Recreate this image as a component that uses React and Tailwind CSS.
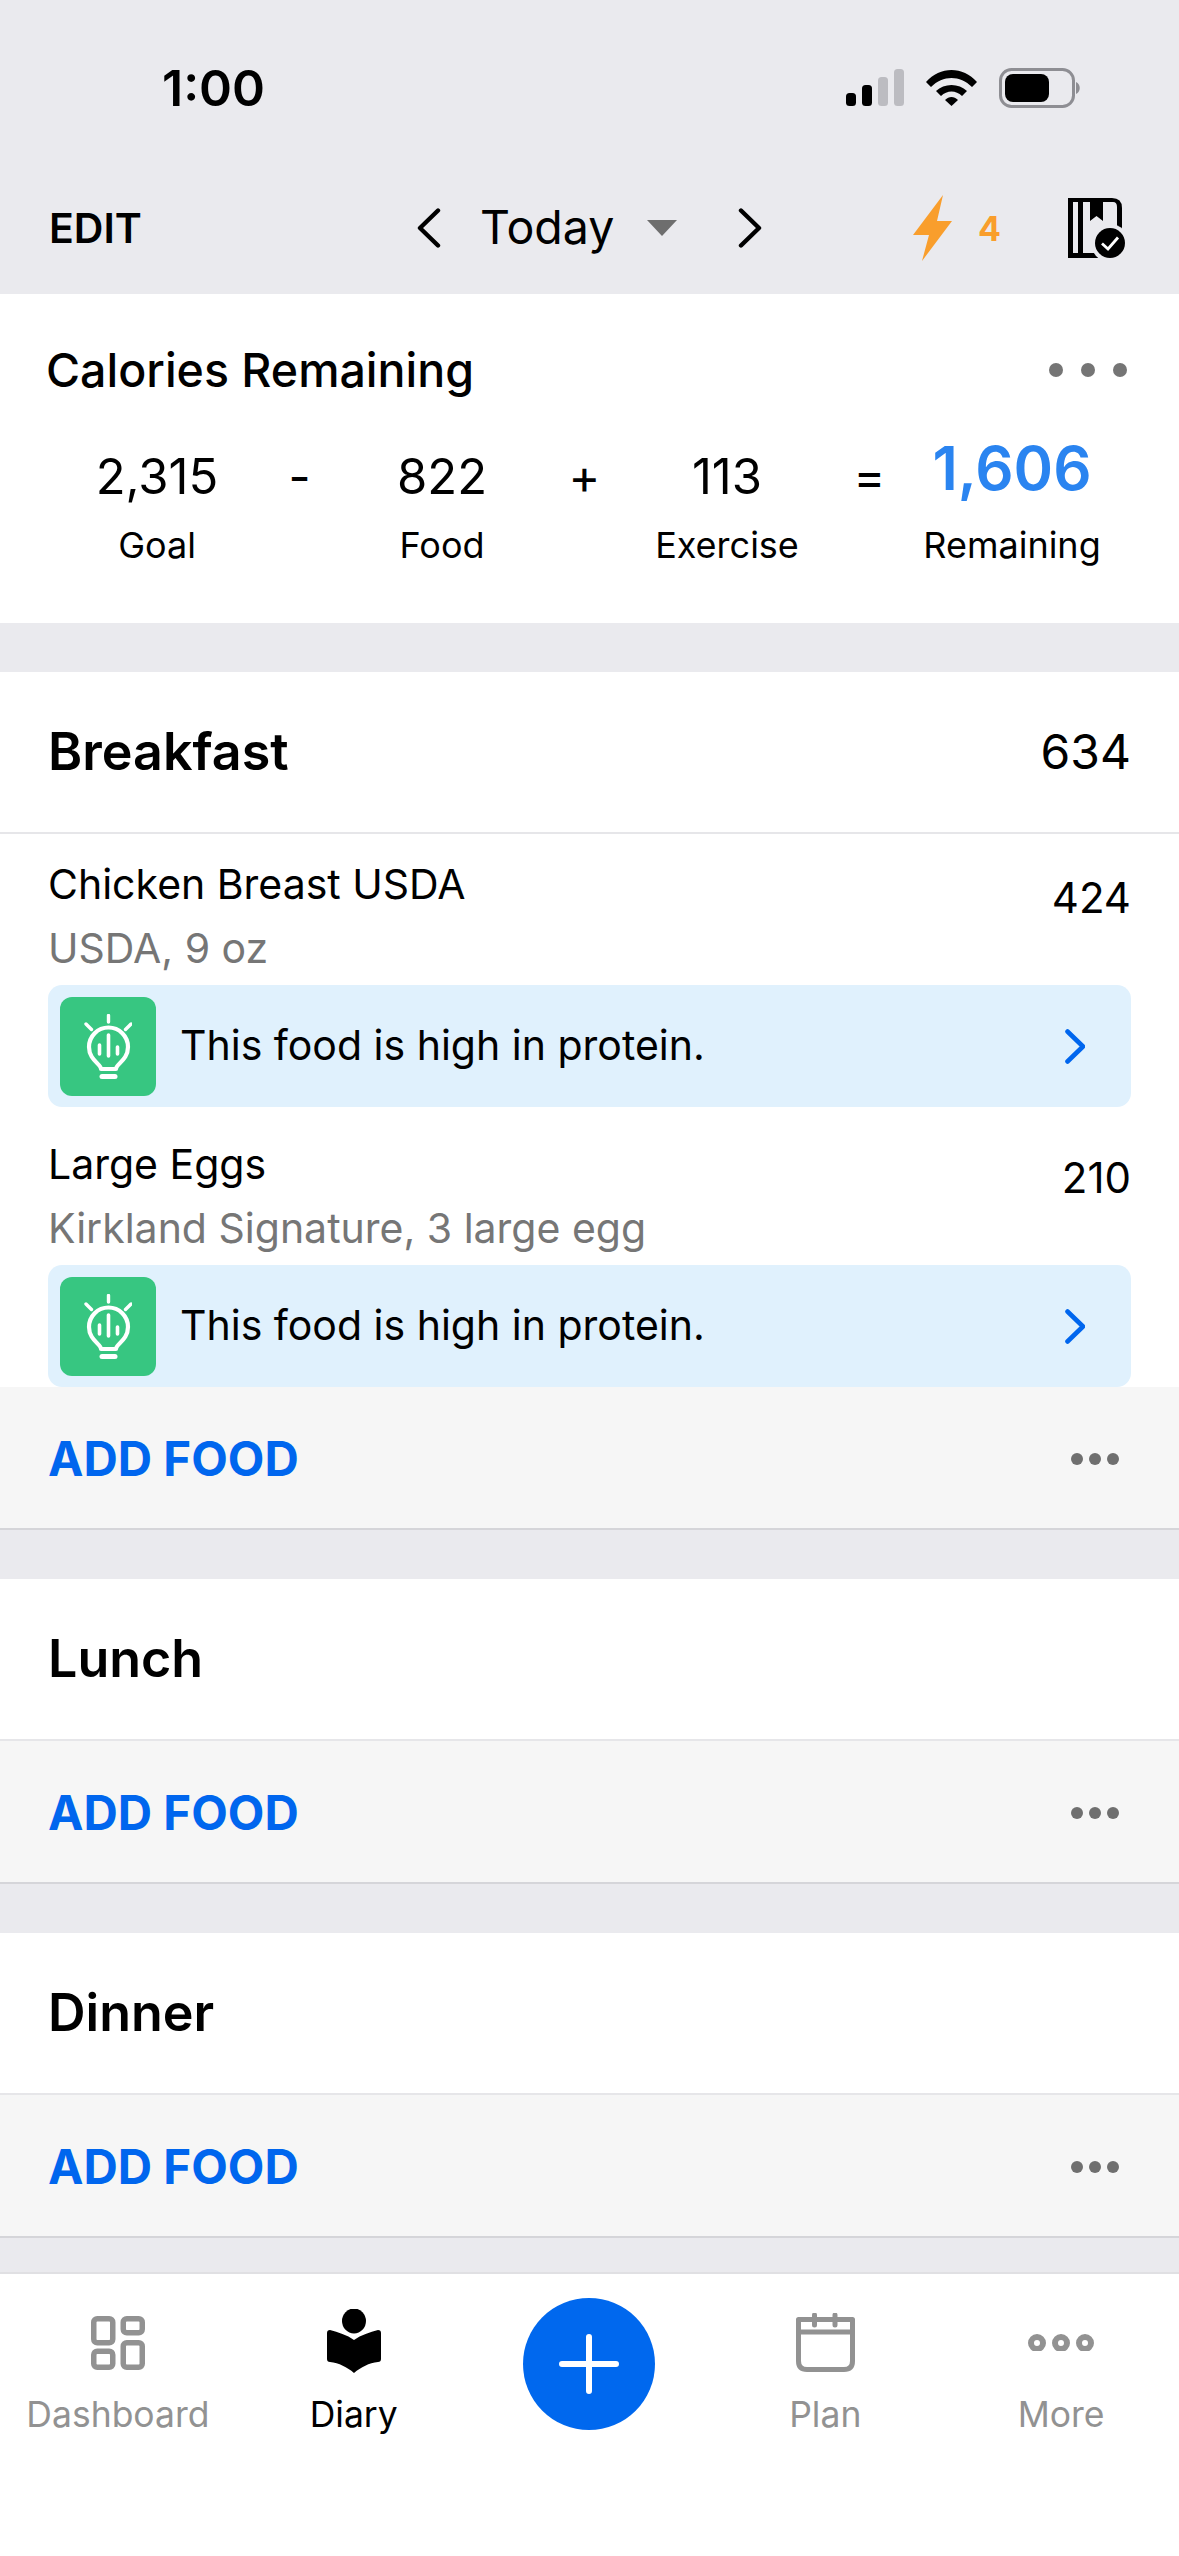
const FONT = 'font-[Inter,"Liberation_Sans",sans-serif]';

const DotsIcon = () => (
  <svg width="48" height="12" viewBox="0 0 48 12" fill="#6f6f6f">
    <circle cx="6" cy="6" r="6" />
    <circle cx="24" cy="6" r="6" />
    <circle cx="42" cy="6" r="6" />
  </svg>
);

const CardDotsIcon = () => (
  <svg width="78" height="14" viewBox="0 0 78 14" fill="#757575">
    <circle cx="7" cy="7" r="7" />
    <circle cx="39" cy="7" r="7" />
    <circle cx="71" cy="7" r="7" />
  </svg>
);

const StatusIcons = () => (
  <div className="flex items-center">
    <svg width="58" height="38" viewBox="0 0 58 38">
      <rect x="0" y="24" width="10" height="13" rx="3.5" fill="#000" />
      <rect x="16" y="16" width="10" height="21" rx="3.5" fill="#000" />
      <rect x="32" y="8" width="10" height="29" rx="3.5" fill="#bcbcc1" />
      <rect x="48" y="0" width="10" height="37" rx="3.5" fill="#bcbcc1" />
    </svg>
    <svg className="ml-[22px]" width="51" height="38" viewBox="0 0 51 38">
      <path d="M0 13 C14 -3 37 -3 51 13 L46 18 C34 6 17 6 5 18 Z" fill="#000" />
      <path d="M10 22 C18 14 33 14 41 22 L36 27 C30 21 21 21 15 27 Z" fill="#000" />
      <path d="M19 31 C23 27 28 27 32 31 L25.5 37 Z" fill="#000" />
    </svg>
    <svg className="ml-[22px]" width="82" height="40" viewBox="0 0 82 40">
      <rect x="1.5" y="1.5" width="73" height="37" rx="11" fill="none" stroke="#8e8e93" strokeWidth="3" />
      <rect x="6" y="6" width="44" height="28" rx="8" fill="#000" />
      <path d="M77 14 C82 16 82 24 77 26 Z" fill="#8e8e93" />
    </svg>
  </div>
);

const NavChevron = ({ flip }) => (
  <svg
    width="24"
    height="40"
    viewBox="0 0 24 40"
    fill="none"
    stroke="#000"
    strokeWidth="4.4"
    strokeLinecap="round"
    strokeLinejoin="round"
  >
    <path d={flip ? 'M3 2.5 L21 20 L3 37.5' : 'M21 2.5 L3 20 L21 37.5'} />
  </svg>
);

const BoltIcon = () => (
  <svg width="40" height="66" viewBox="0 0 40 66" fill="#f99e2c">
    <path d="M30 0 L0 40 L16 40 L9 66 L39 26 L24 26 Z" />
  </svg>
);

const DiaryCheckIcon = () => (
  <svg width="58" height="60" viewBox="0 0 58 60">
    <path d="M0 0 H44 Q54 0 54 10 V35 L30 60 H0 Z" fill="#000" />
    <rect x="5" y="4" width="5" height="51" fill="#eaeaee" />
    <path d="M15 4 H22 V23 L28.5 18 L35 23 V4 H45 Q49 4 49 9 V30 L28 55 H15 Z" fill="#eaeaee" />
    <circle cx="42" cy="45" r="19" fill="#eaeaee" />
    <circle cx="42" cy="45" r="15" fill="#000" />
    <path d="M34 45.5 L40 51 L50 39.5" fill="none" stroke="#fff" strokeWidth="2.8" />
  </svg>
);

const BulbIcon = () => (
  <svg width="48" height="65" viewBox="0 0 48 65" fill="none" stroke="#fff" strokeLinecap="round">
    <path d="M24.5 1.5 V8 M2 10 L7.5 15.5 M47 10 L41.5 15.5" strokeWidth="3.4" />
    <path
      d="M17 55 C17 50 5 46 5 33 A19.5 19.5 0 0 1 44 33 C44 46 32 50 32 55 Z"
      strokeWidth="4.2"
      strokeLinejoin="round"
    />
    <path d="M15.5 31 V40 M24.5 21 V42 M33.5 33 V40" strokeWidth="3.6" />
    <path d="M18 62.5 H31" strokeWidth="5" />
  </svg>
);

const Stat = ({ value, label, highlight }) => (
  <div className="w-[200px] flex flex-col items-center">
    <div
      className={
        highlight
          ? 'h-[72px] text-[60px] leading-[64px] font-semibold text-[#2a84f0]'
          : 'h-[72px] pt-[9px] text-[49px] leading-[64px] font-normal text-black'
      }
    >
      {value}
    </div>
    <div className="mt-[11px] text-[36px] leading-[52px] text-black">{label}</div>
  </div>
);

const Operator = ({ children }) => (
  <div className="w-[85px] h-[72px] pt-[9px] text-center text-[48px] leading-[64px] text-black">
    {children}
  </div>
);

const FoodRow = ({ name, detail, calories }) => (
  <div className="px-[48px] pt-[20px]">
    <div className="flex justify-between">
      <div>
        <div className="text-[41px] leading-[60px] text-black">{name}</div>
        <div className="mt-[4px] text-[41px] leading-[60px] text-[#767676]">{detail}</div>
      </div>
      <div className="pt-[14px] text-[42px] leading-[60px] text-black">{calories}</div>
    </div>
    <div className="mt-[7px] h-[122px] pl-[12px] pr-[46px] flex items-center rounded-[14px] bg-[#e0f1fd]">
      <div className="w-[96px] h-[99px] flex items-center justify-center rounded-[12px] bg-[#37c681]">
        <BulbIcon />
      </div>
      <div className="ml-[24px] flex-1 text-[41px] text-black">This food is high in protein.</div>
      <svg
        width="20"
        height="35"
        viewBox="0 0 20 35"
        fill="none"
        stroke="#0066ee"
        strokeWidth="4.6"
        strokeLinecap="round"
        strokeLinejoin="round"
      >
        <path d="M2.5 2.5 L18 17.5 L2.5 32.5" />
      </svg>
    </div>
  </div>
);

const AddFoodBar = () => (
  <div className="h-[143px] pt-[2px] px-[48px] flex items-center justify-between bg-[#f6f6f6] border-b-2 border-[#d5d5d9]">
    <div className="text-[47.5px] font-bold text-[#0066ee]">ADD FOOD</div>
    <div className="mr-[12px]">
      <DotsIcon />
    </div>
  </div>
);

const MealSection = ({ title, total, children }) => (
  <div className="mt-[49px] bg-white">
    <div className="h-[162px] px-[48px] flex items-center justify-between border-b-2 border-[#e6e6e9]">
      <div className="text-[52px] font-semibold text-black">{title}</div>
      {total && <div className="text-[48px] text-black">{total}</div>}
    </div>
    {children}
    <AddFoodBar />
  </div>
);

const TabItem = ({ icon, label, active, bottom }) => (
  <div className="flex flex-col items-center">
    <div className={`h-[100px] flex items-end justify-center ${bottom}`}>{icon}</div>
    <div className={`mt-[16px] text-[35.5px] leading-[50px] ${active ? 'text-black' : 'text-[#929292]'}`}>
      {label}
    </div>
  </div>
);

const DashboardIcon = () => (
  <svg width="54" height="54" viewBox="0 0 54 54" fill="none" stroke="#929292" strokeWidth="5.5">
    <rect x="2.75" y="2.75" width="19" height="24" rx="3.5" />
    <rect x="32.25" y="2.75" width="19" height="14" rx="3.5" />
    <rect x="2.75" y="35.25" width="19" height="16" rx="3.5" />
    <rect x="32.25" y="26.75" width="19" height="24.5" rx="3.5" />
  </svg>
);

const ReaderIcon = () => (
  <svg width="54" height="64" viewBox="0 0 54 64" fill="#000">
    <ellipse cx="27" cy="12" rx="12" ry="12.5" />
    <path d="M0 24 Q0 21 3 21 C11 23 20 26 27 31 C34 26 43 23 51 21 Q54 21 54 24 V50 Q54 53 51 53 C42 54 34 58 27 64 C20 58 12 54 3 53 Q0 53 0 50 Z" />
  </svg>
);

const CalendarIcon = () => (
  <svg width="59" height="59" viewBox="0 0 59 59" fill="none" stroke="#929292" strokeWidth="5">
    <path d="M2.5 6.5 H56.5 V48 Q56.5 56.5 48 56.5 H11 Q2.5 56.5 2.5 48 Z" strokeLinejoin="round" />
    <path d="M2.5 19 H56.5" />
    <path d="M18.5 2 V12 M39 2 V12" strokeLinecap="round" />
  </svg>
);

const MoreIcon = () => (
  <svg width="66" height="17" viewBox="0 0 66 17" fill="none" stroke="#929292" strokeWidth="6">
    <circle cx="9" cy="9" r="6" />
    <circle cx="33" cy="9" r="6" />
    <circle cx="57" cy="9" r="6" />
  </svg>
);

export default function App() {
  return (
    <div className={`w-[1179px] h-[2556px] flex flex-col overflow-hidden bg-[#eaeaee] ${FONT}`}>
      {/* Status bar + date nav */}
      <div className="h-[294px] shrink-0">
        <div className="h-[176px] pl-[162px] pr-[98px] pt-[58px] flex items-start justify-between">
          <div className="text-[50px] leading-[60px] font-semibold text-black">1:00</div>
          <div className="pt-[10px]">
            <StatusIcons />
          </div>
        </div>
        <div className="h-[104px] pl-[49px] flex items-center">
          <div className="w-[368px] pt-[2px] text-[41px] font-semibold text-black">EDIT</div>
          <NavChevron />
          <div className="ml-[39px] w-[132px] whitespace-nowrap text-[46.5px] text-black">Today</div>
          <div className="ml-[35px] w-0 h-0 border-x-[15px] border-x-transparent border-t-[16px] border-t-[#6e6e6e]" />
          <div className="ml-[61px]">
            <NavChevron flip />
          </div>
          <div className="ml-[151px]">
            <BoltIcon />
          </div>
          <div className="ml-[25px] w-[22px] text-[34px] font-bold text-[#f99e2c]">4</div>
          <div className="ml-[68px]">
            <DiaryCheckIcon />
          </div>
        </div>
      </div>

      {/* Calories remaining */}
      <div className="h-[329px] shrink-0 bg-white">
        <div className="pl-[46px] pr-[52px] pt-[46px] flex items-center justify-between">
          <div className="text-[46.5px] leading-[60px] font-medium text-black">Calories Remaining</div>
          <CardDotsIcon />
        </div>
        <div className="mt-[36px] pl-[57px] flex items-start">
          <Stat value="2,315" label="Goal" />
          <Operator>-</Operator>
          <Stat value="822" label="Food" />
          <Operator>+</Operator>
          <Stat value="113" label="Exercise" />
          <Operator>=</Operator>
          <Stat value="1,606" label="Remaining" highlight />
        </div>
      </div>

      <MealSection title="Breakfast" total="634">
        <div className="flex flex-col gap-[7px]">
          <FoodRow name="Chicken Breast USDA" detail="USDA, 9 oz" calories="424" />
          <FoodRow name="Large Eggs" detail="Kirkland Signature, 3 large egg" calories="210" />
        </div>
      </MealSection>
      <MealSection title="Lunch" />
      <MealSection title="Dinner" />

      {/* Tab bar */}
      <div className="mt-[34px] flex-1 bg-white border-t-2 border-[#e0e0e3]">
        <div className="grid grid-cols-5">
          <TabItem icon={<DashboardIcon />} label="Dashboard" bottom="pb-[4px]" />
          <TabItem icon={<ReaderIcon />} label="Diary" active bottom="pb-[1px]" />
          <div className="pt-[24px] flex justify-center">
            <div className="w-[132px] h-[132px] flex items-center justify-center rounded-full bg-[#0068ee]">
              <svg width="60" height="60" viewBox="0 0 60 60" stroke="#fff" strokeWidth="6" strokeLinecap="round">
                <path d="M30 3 V57 M3 30 H57" />
              </svg>
            </div>
          </div>
          <TabItem icon={<CalendarIcon />} label="Plan" bottom="pb-[2px]" />
          <TabItem icon={<MoreIcon />} label="More" bottom="pb-[23px]" />
        </div>
      </div>
    </div>
  );
}
